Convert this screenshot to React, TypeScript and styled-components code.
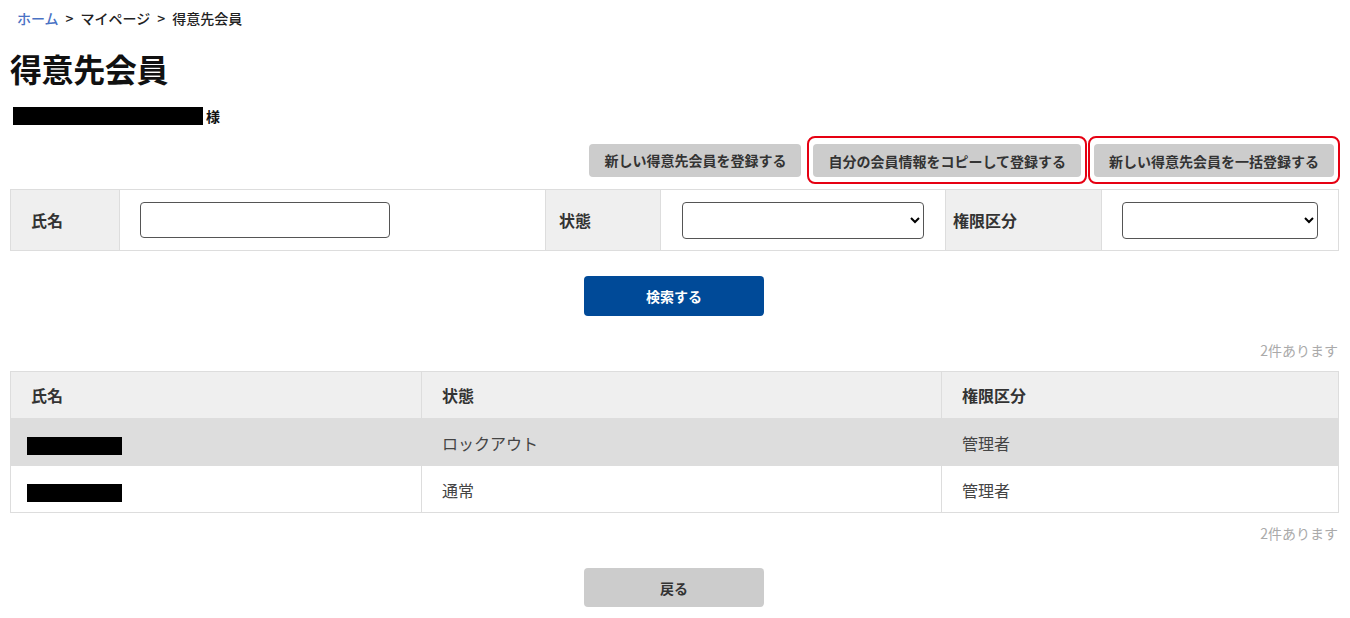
import React from 'react';
import styled, { createGlobalStyle } from 'styled-components';

const GlobalStyle = createGlobalStyle`
  html, body {
    margin: 0;
    padding: 0;
    background: #fff;
  }
  body {
    font-family: "Noto Sans CJK JP", "Noto Sans", sans-serif;
    color: #333;
  }
`;

const Page = styled.div`
  padding: 0 12px 0 10px;
  width: 1350px;
  box-sizing: border-box;
`;

const Breadcrumb = styled.nav`
  display: flex;
  align-items: center;
  gap: 7px;
  padding: 6px 0 0 7px;
  height: 24px;
  font-size: 14px;
  font-weight: 500;
  color: #222;
`;

const Crumb = styled.a<{ $link?: boolean }>`
  color: ${p => (p.$link ? '#4a72c4' : '#222')};
  text-decoration: none;
`;

const Title = styled.h1`
  margin: 18px 0 0;
  font-size: 32px;
  line-height: 40px;
  font-weight: 700;
  color: #111;
  letter-spacing: -0.4px;
`;

const Customer = styled.div`
  display: flex;
  align-items: center;
  gap: 3px;
  margin: 19px 0 0 3px;
  height: 18px;
  font-size: 14px;
  font-weight: 700;
  color: #111;
`;

const Redacted = styled.span<{ $w: number; $h: number }>`
  display: inline-block;
  width: ${p => p.$w}px;
  height: ${p => p.$h}px;
  background: #000;
  vertical-align: middle;
`;

const Toolbar = styled.div`
  display: flex;
  justify-content: flex-end;
  align-items: center;
  margin: 11px -2px 0 0;
  height: 48px;
`;

const Highlight = styled.div<{ $gap: number }>`
  display: flex;
  border: 2px solid #e60012;
  border-radius: 8px;
  padding: 6px 4px 5px;
  margin-left: ${p => p.$gap}px;
`;

const GrayButton = styled.button<{ $w?: number; $h?: number }>`
  height: ${p => p.$h || 33}px;
  ${p => (p.$w ? `width: ${p.$w}px;` : 'padding: 0 15px;')}
  border: none;
  border-radius: 4px;
  background: #cccccc;
  color: #333;
  font-family: inherit;
  font-size: 14px;
  font-weight: 700;
  cursor: pointer;
`;

const SearchTable = styled.table`
  margin-top: 5px;
  width: 1328px;
  border-collapse: collapse;
  table-layout: fixed;
  font-size: 16px;

  td, th {
    border: 1px solid #ddd;
    height: 61px;
  }
`;

const LabelCell = styled.th<{ $w: number; $pad: number }>`
  width: ${p => p.$w}px;
  box-sizing: border-box;
  padding: 0 0 0 ${p => p.$pad}px;
  background: #efefef;
  text-align: left;
  font-weight: 700;
  color: #333;
`;

const FieldCell = styled.td<{ $w: number; $pad: number }>`
  width: ${p => p.$w}px;
  box-sizing: border-box;
  padding: 0 0 0 ${p => p.$pad}px;
`;

const TextInput = styled.input`
  display: block;
  width: 250px;
  height: 36px;
  box-sizing: border-box;
  border: 1px solid #555;
  border-radius: 4px;
  font-family: inherit;
  font-size: 14px;
`;

const Select = styled.select<{ $w: number }>`
  display: block;
  width: ${p => p.$w}px;
  height: 37px;
  box-sizing: border-box;
  border: 1px solid #555;
  border-radius: 4px;
  background: #fff;
  font-family: inherit;
  font-size: 14px;
`;

const Center = styled.div<{ $top: number }>`
  display: flex;
  justify-content: center;
  margin-top: ${p => p.$top}px;
`;

const PrimaryButton = styled.button`
  width: 180px;
  height: 40px;
  border: none;
  border-radius: 4px;
  background: #004a98;
  color: #fff;
  font-family: inherit;
  font-size: 14px;
  font-weight: 700;
  cursor: pointer;
`;

const Count = styled.div<{ $top: number }>`
  margin-top: ${p => p.$top}px;
  width: 1328px;
  text-align: right;
  font-size: 14px;
  line-height: 20px;
  color: #aaa;
`;

const ResultTable = styled.table`
  margin-top: 11px;
  width: 1328px;
  border-collapse: collapse;
  table-layout: fixed;
  font-size: 16px;

  th, td {
    border: 1px solid #ddd;
    height: 47px;
    box-sizing: border-box;
    padding: 0 0 0 20px;
    text-align: left;
  }
  th {
    background: #efefef;
    font-weight: 700;
    color: #333;
  }
`;

const Row = styled.tr<{ $shade?: boolean }>`
  background: ${p => (p.$shade ? '#dddddd' : '#fff')};

  td {
    color: #444;
    padding-top: 2px;
  }
`;

const NameCell = styled.td`
  && {
    padding-left: 16px;
  }
`;

const members = [
  { status: 'ロックアウト', role: '管理者', locked: true },
  { status: '通常', role: '管理者', locked: false },
];

export default function App() {
  return (
    <Page>
      <GlobalStyle />
      <Breadcrumb>
        <Crumb $link href="#">ホーム</Crumb>
        <span>&gt;</span>
        <Crumb href="#">マイページ</Crumb>
        <span>&gt;</span>
        <span>得意先会員</span>
      </Breadcrumb>

      <Title>得意先会員</Title>

      <Customer>
        <Redacted $w={190} $h={18} />
        <span>様</span>
      </Customer>

      <Toolbar>
        <GrayButton>新しい得意先会員を登録する</GrayButton>
        <Highlight $gap={6}>
          <GrayButton>自分の会員情報をコピーして登録する</GrayButton>
        </Highlight>
        <Highlight $gap={1}>
          <GrayButton>新しい得意先会員を一括登録する</GrayButton>
        </Highlight>
      </Toolbar>

      <SearchTable>
        <tbody>
          <tr>
            <LabelCell $w={109} $pad={20}>氏名</LabelCell>
            <FieldCell $w={426} $pad={20}>
              <TextInput type="text" />
            </FieldCell>
            <LabelCell $w={115} $pad={13}>状態</LabelCell>
            <FieldCell $w={285} $pad={21}>
              <Select $w={242}>
                <option value=""></option>
                <option>通常</option>
                <option>ロックアウト</option>
              </Select>
            </FieldCell>
            <LabelCell $w={156} $pad={7}>権限区分</LabelCell>
            <FieldCell $w={237} $pad={20}>
              <Select $w={196}>
                <option value=""></option>
                <option>管理者</option>
                <option>一般</option>
              </Select>
            </FieldCell>
          </tr>
        </tbody>
      </SearchTable>

      <Center $top={25}>
        <PrimaryButton>検索する</PrimaryButton>
      </Center>

      <Count $top={24}>2件あります</Count>

      <ResultTable>
        <colgroup>
          <col style={{ width: 411 }} />
          <col style={{ width: 520 }} />
          <col style={{ width: 397 }} />
        </colgroup>
        <thead>
          <tr>
            <th>氏名</th>
            <th>状態</th>
            <th>権限区分</th>
          </tr>
        </thead>
        <tbody>
          {members.map((m, i) => (
            <Row key={i} $shade={m.locked}>
              <NameCell>
                <Redacted $w={95} $h={18} />
              </NameCell>
              <td>{m.status}</td>
              <td>{m.role}</td>
            </Row>
          ))}
        </tbody>
      </ResultTable>

      <Count $top={10}>2件あります</Count>

      <Center $top={25}>
        <GrayButton $w={180} $h={39}>戻る</GrayButton>
      </Center>
    </Page>
  );
}
